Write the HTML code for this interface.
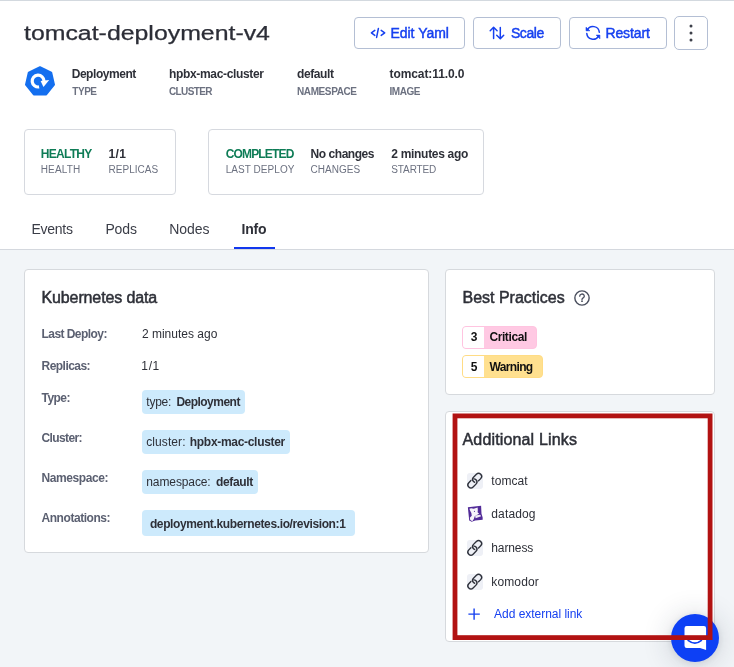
<!DOCTYPE html>
<html><head><meta charset="utf-8">
<style>
*{box-sizing:border-box;margin:0;padding:0}
html,body{width:734px;height:667px;overflow:hidden;background:#fff;font-family:"Liberation Sans",sans-serif}
.a{position:absolute}
.t{position:absolute;line-height:20px;white-space:nowrap}
#title{position:absolute;left:24px;top:18px;font-size:20px;line-height:30px;color:#2c2e37;white-space:nowrap;transform-origin:0 50%;transform:scaleX(1.243);-webkit-text-stroke:0.25px #2c2e37}
.btn{position:absolute;border:1px solid #b4bfd4;border-radius:4px;background:#fff}
.box{position:absolute;border:1px solid #d6d9df;border-radius:4px;background:#fff}
.card{position:absolute;background:#fff;border:1px solid #d6d9dd;border-radius:4px}
.chip{position:absolute;background:#cdeafc;border-radius:4px}
.lic{position:absolute;left:467px;width:16px;height:15.6px;border-radius:3px;background:#eef0f6}
svg{position:absolute;overflow:visible}
</style></head><body>
<div class="a" style="left:0;top:0;width:734px;height:1px;background:#d3d9df"></div>
<div class="a" style="left:0;top:249px;width:734px;height:1px;background:#d4d8de"></div>
<div class="a" style="left:0;top:250px;width:734px;height:417px;background:#f2f5f8"></div>


<!-- buttons -->
<div class="btn" style="left:354px;top:17px;width:111px;height:32px"></div>
<div class="btn" style="left:473px;top:17px;width:88px;height:32px"></div>
<div class="btn" style="left:569px;top:17px;width:98px;height:32px"></div>
<div class="btn" style="left:674px;top:16px;width:34px;height:34px;border-radius:5px"></div>
<svg class="a" style="left:0;top:0" width="734" height="667" viewBox="0 0 734 667" fill="none">
  <!-- </> -->
  <g stroke="#1640f0" stroke-width="1.5" stroke-linecap="round" stroke-linejoin="round">
    <path d="M374.8 30.4 L371.4 32.9 L374.8 35.4"/>
    <path d="M378.4 28.4 L376.6 37.4"/>
    <path d="M381.2 30.4 L384.7 32.9 L381.2 35.4"/>
    <!-- scale arrows -->
    <path d="M493.6 38.6 V27.5 M490.2 30.7 L493.6 27.3 L497.1 30.7"/>
    <path d="M500.3 27.4 V38.5 M496.7 35.2 L500.3 38.7 L503.7 35.2"/>
    <!-- restart -->
    <path d="M587.3 30.2 A6.3 6.3 0 0 1 599.3 32.3"/>
    <path d="M586.8 33.6 A6.3 6.3 0 0 0 598.4 36.3"/>
  </g>
  <path d="M586 27.2 V30.8 H589.9 Z" fill="#1640f0" stroke="#1640f0" stroke-width="0.6" stroke-linejoin="round"/>
  <path d="M599.9 38.8 V35.1 H596.2 Z" fill="#1640f0" stroke="#1640f0" stroke-width="0.6" stroke-linejoin="round"/>
  <!-- more dots -->
  <circle cx="691" cy="26" r="1.5" fill="#3d404a"/><circle cx="691" cy="32.9" r="1.5" fill="#3d404a"/><circle cx="691" cy="39.9" r="1.5" fill="#3d404a"/>
  <!-- k8s deployment heptagon -->
  <path d="M40 67.2 L51.2 72.6 L54 84.7 L46.2 94.4 L33.8 94.4 L26 84.7 L28.8 72.6 Z" fill="#146fef" stroke="#146fef" stroke-width="2" stroke-linejoin="round"/>
  <path d="M44 81.1 A5.9 5.9 0 1 0 39.1 86.9" stroke="#fff" stroke-width="3.2" fill="none"/>
  <path d="M40.6 80.9 L49.2 80.1 L43.5 86.9 Z" fill="#fff"/>
</svg>

<!-- stat boxes -->
<div class="box" style="left:24px;top:129px;width:152px;height:66px"></div>
<div class="box" style="left:208px;top:129px;width:276px;height:66px"></div>

<!-- tab underline -->
<div class="a" style="left:234px;top:247px;width:41px;height:2px;background:#1238ee"></div>

<!-- cards -->
<div class="card" style="left:24px;top:269px;width:405px;height:284px"></div>
<div class="card" style="left:445px;top:269px;width:270px;height:126px"></div>
<div class="card" style="left:445px;top:411px;width:270px;height:231px"></div>

<!-- chips -->
<div class="chip" style="left:142px;top:390px;width:103px;height:23.7px"></div>
<div class="chip" style="left:142px;top:430px;width:148px;height:23.7px"></div>
<div class="chip" style="left:142px;top:470px;width:115.8px;height:23.9px"></div>
<div class="chip" style="left:142px;top:510px;width:212.7px;height:25.6px"></div>

<!-- badges -->
<div class="a" style="left:462px;top:326px;width:75px;height:23px;border-radius:4px;background:#ffc9e3;border:1px solid #ffc4e0;overflow:hidden"><div class="a" style="left:0;top:0;width:21.3px;height:23px;background:#fff"></div></div>
<div class="a" style="left:462px;top:355px;width:81px;height:23px;border-radius:4px;background:#ffe08f;border:1px solid #ffdc85;overflow:hidden"><div class="a" style="left:0;top:0;width:21.3px;height:23px;background:#fff"></div></div>

<!-- link icons -->
<div class="lic" style="top:473px"></div>
<div class="lic" style="top:540.2px"></div>
<div class="lic" style="top:574px"></div>
<svg class="a" style="left:0;top:0" width="734" height="667" viewBox="0 0 734 667" fill="none">
  <defs>
    <g id="lk" stroke="#2d303a" stroke-width="1.35" fill="none" stroke-linecap="round">
      <rect x="-5.1" y="-3.05" width="10.2" height="6.1" rx="3.05" transform="translate(5.4,10.4) rotate(-45)" stroke-dasharray="23.9 3.5" stroke-dashoffset="-6.5"/>
      <rect x="-5.1" y="-3.05" width="10.2" height="6.1" rx="3.05" transform="translate(10.1,4.9) rotate(-45)" stroke-dasharray="23.1 4.3" stroke-dashoffset="-20.8"/>
    </g>
  </defs>
  <use href="#lk" x="467" y="473"/>
  <use href="#lk" x="467" y="540.2"/>
  <use href="#lk" x="467" y="574"/>
  <!-- datadog -->
  <g transform="translate(462,501) scale(0.03899)">
    <path d="M150 160 L490 125 L500 330 L530 420 L530 480 L340 500 L250 530 L185 500 Z" fill="#522b98"/>
    <path d="M190 200 Q230 170 300 200 L400 165 Q410 230 400 290 L440 330 L330 385 L300 470 L265 520 L212 490 L200 430 L250 380 L240 310 L215 260 Z" fill="#fff" opacity="0.95"/>
    <path d="M335 375 L465 350 L490 390 L350 445 Z" fill="#fff" opacity="0.9"/>
    <circle cx="318" cy="265" r="14" fill="#4a2391"/>
    <circle cx="400" cy="320" r="12" fill="#fff"/>
  </g>
  <!-- help icon -->
  <circle cx="582" cy="298" r="7.15" stroke="#4a4f5e" stroke-width="1.4"/>
  <path d="M579.7 296.2 A2.3 2.1 0 1 1 583.2 297.9 Q582 298.6 582 299.4" stroke="#4a4f5e" stroke-width="1.3" stroke-linecap="round"/>
  <rect x="581.2" y="300.4" width="1.6" height="1.6" fill="#4a4f5e"/>
  <!-- plus -->
  <path d="M468.4 614.1 H479.8 M474.1 608.4 V619.8" stroke="#1640f0" stroke-width="1.4"/>
</svg>

<div id="tx" style="position:absolute;left:0;top:0;width:734px;height:667px;will-change:transform">
<div class="t" style="left:390.4px;top:23.00px;font-size:14px;font-weight:400;color:#1640f0;letter-spacing:-0.003px;-webkit-text-stroke:0.45px #1640f0">Edit Yaml</div>
<div class="t" style="left:510.9px;top:23.00px;font-size:14px;font-weight:400;color:#1640f0;letter-spacing:-0.408px;-webkit-text-stroke:0.45px #1640f0">Scale</div>
<div class="t" style="left:605.4px;top:23.00px;font-size:14px;font-weight:400;color:#1640f0;letter-spacing:-0.104px;-webkit-text-stroke:0.45px #1640f0">Restart</div>
<div class="t" style="left:71.7px;top:64.00px;font-size:12px;font-weight:700;color:#2e3038;letter-spacing:-0.454px">Deployment</div>
<div class="t" style="left:72.3px;top:82.00px;font-size:10px;font-weight:700;color:#6c7180;letter-spacing:-0.475px">TYPE</div>
<div class="t" style="left:169.0px;top:64.00px;font-size:12px;font-weight:700;color:#2e3038;letter-spacing:-0.335px">hpbx-mac-cluster</div>
<div class="t" style="left:169.0px;top:82.00px;font-size:10px;font-weight:700;color:#6c7180;letter-spacing:-0.622px">CLUSTER</div>
<div class="t" style="left:297.0px;top:64.00px;font-size:12px;font-weight:700;color:#2e3038;letter-spacing:-0.391px">default</div>
<div class="t" style="left:297.0px;top:82.00px;font-size:10px;font-weight:700;color:#6c7180;letter-spacing:-0.395px">NAMESPACE</div>
<div class="t" style="left:389.5px;top:64.00px;font-size:12px;font-weight:700;color:#2e3038;letter-spacing:-0.087px">tomcat:11.0.0</div>
<div class="t" style="left:389.5px;top:82.00px;font-size:10px;font-weight:700;color:#6c7180;letter-spacing:-0.445px">IMAGE</div>
<div class="t" style="left:40.7px;top:144.00px;font-size:12px;font-weight:700;color:#0e7c56;letter-spacing:-0.697px">HEALTHY</div>
<div class="t" style="left:40.7px;top:160.00px;font-size:10px;font-weight:400;color:#6c7180;letter-spacing:0.176px">HEALTH</div>
<div class="t" style="left:108.6px;top:144.00px;font-size:12px;font-weight:700;color:#2e3038;letter-spacing:0.306px">1/1</div>
<div class="t" style="left:108.6px;top:160.00px;font-size:10px;font-weight:400;color:#6c7180;letter-spacing:0.019px">REPLICAS</div>
<div class="t" style="left:225.7px;top:144.00px;font-size:12px;font-weight:700;color:#0e7c56;letter-spacing:-0.83px">COMPLETED</div>
<div class="t" style="left:225.7px;top:160.00px;font-size:10px;font-weight:400;color:#6c7180;letter-spacing:0.051px">LAST DEPLOY</div>
<div class="t" style="left:310.6px;top:144.00px;font-size:12px;font-weight:700;color:#2e3038;letter-spacing:-0.457px">No changes</div>
<div class="t" style="left:310.6px;top:160.00px;font-size:10px;font-weight:400;color:#6c7180;letter-spacing:0.024px">CHANGES</div>
<div class="t" style="left:391.3px;top:144.00px;font-size:12px;font-weight:700;color:#2e3038;letter-spacing:-0.307px">2 minutes ago</div>
<div class="t" style="left:391.3px;top:160.00px;font-size:10px;font-weight:400;color:#6c7180;letter-spacing:-0.125px">STARTED</div>
<div class="t" style="left:31.4px;top:219.00px;font-size:14px;font-weight:400;color:#3a3d47;letter-spacing:-0.242px">Events</div>
<div class="t" style="left:105.4px;top:219.00px;font-size:14px;font-weight:400;color:#3a3d47;letter-spacing:-0.107px">Pods</div>
<div class="t" style="left:169.2px;top:219.00px;font-size:14px;font-weight:400;color:#3a3d47;letter-spacing:-0.042px">Nodes</div>
<div class="t" style="left:241.6px;top:219.00px;font-size:14px;font-weight:700;color:#2e3038;letter-spacing:-0.219px">Info</div>
<div class="t" style="left:41.5px;top:288.00px;font-size:16px;font-weight:400;color:#2e3038;letter-spacing:-0.123px;-webkit-text-stroke:0.5px #2e3038">Kubernetes data</div>
<div class="t" style="left:41.5px;top:324.00px;font-size:12px;font-weight:700;color:#5b6071;letter-spacing:-0.556px">Last Deploy:</div>
<div class="t" style="left:141.9px;top:324.00px;font-size:12px;font-weight:400;color:#2e3038;letter-spacing:0.009px">2 minutes ago</div>
<div class="t" style="left:41.5px;top:356.00px;font-size:12px;font-weight:700;color:#5b6071;letter-spacing:-0.532px">Replicas:</div>
<div class="t" style="left:141.3px;top:356.00px;font-size:12px;font-weight:400;color:#2e3038;letter-spacing:0.656px">1/1</div>
<div class="t" style="left:41.5px;top:388.00px;font-size:12px;font-weight:700;color:#5b6071;letter-spacing:-0.531px">Type:</div>
<div class="t" style="left:41.5px;top:428.00px;font-size:12px;font-weight:700;color:#5b6071;letter-spacing:-0.621px">Cluster:</div>
<div class="t" style="left:41.5px;top:468.00px;font-size:12px;font-weight:700;color:#5b6071;letter-spacing:-0.402px">Namespace:</div>
<div class="t" style="left:41.5px;top:508.00px;font-size:12px;font-weight:700;color:#5b6071;letter-spacing:-0.445px">Annotations:</div>
<div class="t" style="left:146.3px;top:392.00px;font-size:12px;font-weight:400;color:#2e3038;letter-spacing:-0.229px">type:</div>
<div class="t" style="left:176.4px;top:392.00px;font-size:12px;font-weight:700;color:#2e3038;letter-spacing:-0.521px">Deployment</div>
<div class="t" style="left:146.3px;top:432.00px;font-size:12px;font-weight:400;color:#2e3038;letter-spacing:0.073px">cluster:</div>
<div class="t" style="left:189.8px;top:432.00px;font-size:12px;font-weight:700;color:#2e3038;letter-spacing:-0.302px">hpbx-mac-cluster</div>
<div class="t" style="left:146.3px;top:472.00px;font-size:12px;font-weight:400;color:#2e3038;letter-spacing:-0.108px">namespace:</div>
<div class="t" style="left:216.0px;top:472.00px;font-size:12px;font-weight:700;color:#2e3038;letter-spacing:-0.341px">default</div>
<div class="t" style="left:149.9px;top:514.00px;font-size:12px;font-weight:700;color:#2e3038;letter-spacing:-0.375px">deployment.kubernetes.io/revision:1</div>
<div class="t" style="left:462.5px;top:288.00px;font-size:16px;font-weight:400;color:#2e3038;letter-spacing:-0.005px;-webkit-text-stroke:0.5px #2e3038">Best Practices</div>
<div class="t" style="left:470.7px;top:327.00px;font-size:12px;font-weight:700;color:#111;letter-spacing:0px">3</div>
<div class="t" style="left:489.4px;top:327.00px;font-size:12px;font-weight:700;color:#111;letter-spacing:-0.398px">Critical</div>
<div class="t" style="left:470.7px;top:357.00px;font-size:12px;font-weight:700;color:#111;letter-spacing:0px">5</div>
<div class="t" style="left:489.4px;top:357.00px;font-size:12px;font-weight:700;color:#111;letter-spacing:-0.627px">Warning</div>
<div class="t" style="left:462.5px;top:430.00px;font-size:16px;font-weight:400;color:#2e3038;letter-spacing:0.155px;-webkit-text-stroke:0.5px #2e3038">Additional Links</div>
<div class="t" style="left:491.3px;top:471.00px;font-size:12px;font-weight:400;color:#2e3038;letter-spacing:0.077px">tomcat</div>
<div class="t" style="left:491.3px;top:504.00px;font-size:12px;font-weight:400;color:#2e3038;letter-spacing:0.135px">datadog</div>
<div class="t" style="left:491.3px;top:538.00px;font-size:12px;font-weight:400;color:#2e3038;letter-spacing:-0.117px">harness</div>
<div class="t" style="left:491.3px;top:572.00px;font-size:12px;font-weight:400;color:#2e3038;letter-spacing:0.135px">komodor</div>
<div class="t" style="left:494.1px;top:604.00px;font-size:12px;font-weight:400;color:#1640f0;letter-spacing:-0.032px">Add external link</div>
<div id="title">tomcat-deployment-v4</div>
</div>

<!-- chat -->
<div class="a" style="left:671.1px;top:613.8px;width:48px;height:48px;border-radius:50%;background:#0d40f5;box-shadow:0 1px 6px rgba(30,40,60,.10),0 2px 30px rgba(30,40,60,.20)"></div>
<svg class="a" style="left:0;top:0" width="734" height="667" viewBox="0 0 734 667" fill="none">
  <path d="M686.7 626 H703.9 A2.2 2.2 0 0 1 706.1 628.2 V650 L700 647.9 H686.7 A2.2 2.2 0 0 1 684.5 645.7 V628.2 A2.2 2.2 0 0 1 686.7 626 Z" fill="#fff"/>
  <path d="M687.6 640.2 Q695 646 701.9 640.2" stroke="#0d40f5" stroke-width="1.6"/>
  <!-- red highlight -->
  <rect x="455" y="415.9" width="255.1" height="221.7" stroke="#b21212" stroke-width="4.8"/>
</svg>
</body></html>
